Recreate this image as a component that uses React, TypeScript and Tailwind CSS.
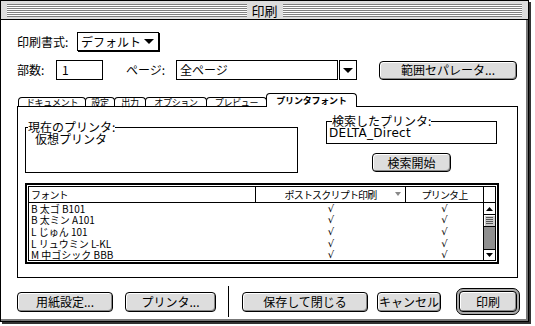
import React from "react";

const STRIPES =
  "h-[13px] flex-1 bg-[repeating-linear-gradient(to_bottom,#808080_0px,#808080_1px,#ffffff_1px,#ffffff_2px)]";

const BUTTON =
  "flex items-center justify-center rounded-[4px] border border-black bg-[#dddddd] shadow-[inset_1px_1px_0_#ffffff,inset_-1px_-1px_0_#888888] text-[12px] leading-none";

const TABS = [
  { label: "ドキュメント", w: "w-[68px]" },
  { label: "設定", w: "w-[30px]" },
  { label: "出力", w: "w-[32px]" },
  { label: "オプション", w: "w-[62px]" },
  { label: "プレビュー", w: "w-[61px]" },
];

const FONTS = [
  "B 太ゴ B101",
  "B 太ミン A101",
  "L じゅん 101",
  "L リュウミン L-KL",
  "M 中ゴシック BBB",
];

function Tri({ up = false, w = 10, h = 5, color = "#000" }) {
  const pts = up ? `0,${h} ${w},${h} ${w / 2},0` : `0,0 ${w},0 ${w / 2},${h}`;
  return (
    <svg width={w} height={h} viewBox={`0 0 ${w} ${h}`} className="block">
      <polygon points={pts} fill={color} />
    </svg>
  );
}

function TitleBar() {
  return (
    <div className="flex h-[19px] items-center border-b border-black bg-[#dddddd] px-[6px]">
      <div className={STRIPES} />
      <div className="px-[5px] text-[13px] leading-none">印刷</div>
      <div className={STRIPES} />
    </div>
  );
}

function Tabs() {
  return (
    <div className="relative z-10 mt-[13px] flex h-[14px] items-end pl-px">
      {TABS.map((t, i) => (
        <div
          key={t.label}
          className={`${t.w} ${i > 0 ? "-ml-px" : ""} mb-px flex h-[9px] items-center justify-center rounded-t-[4px] border-x border-t border-black bg-white text-[9px] leading-none tracking-[-0.3px]`}
        >
          {t.label}
        </div>
      ))}
      <div className="-ml-px flex h-[14px] w-[91px] items-center justify-center rounded-t-[4px] border-x border-t border-black bg-white text-[9px] font-bold leading-none tracking-[-0.2px]">
        プリンタフォント
      </div>
    </div>
  );
}

function FontTable() {
  return (
    <div className="mt-[10px] h-[81px] w-[474px] border-2 border-black p-px">
      <div className="flex h-full flex-col border border-black">
        <div className="flex h-[16px] border-b border-black text-[10px] leading-none tracking-[-0.8px]">
          <div className="flex w-[227px] items-center border-r border-black pl-[2px]">フォント</div>
          <div className="relative flex w-[150px] items-center justify-center border-r border-black">
            ポストスクリプト印刷
            <div className="absolute right-[4px] top-[5px]">
              <Tri w={6} h={4} color="#888888" />
            </div>
          </div>
          <div className="flex w-[78px] items-center justify-center border-r border-black">プリンタ上</div>
          <div className="flex-1" />
        </div>
        <div className="flex min-h-0 flex-1 overflow-hidden">
          <div className="w-[454px]">
            {FONTS.map((f) => (
              <div key={f} className="flex h-[11.6px] items-center text-[10px] leading-[10px]">
                <div className="w-[227px] pl-[2px]">{f}</div>
                <div className="w-[150px] text-center font-['DejaVu_Sans',sans-serif]">√</div>
                <div className="w-[77px] text-center font-['DejaVu_Sans',sans-serif]">√</div>
              </div>
            ))}
          </div>
          <div className="flex flex-1 flex-col border-l border-black">
            <div className="flex h-[12px] items-center justify-center border-b border-black bg-white">
              <Tri up w={7} h={4} />
            </div>
            <div className="flex h-[12px] flex-col items-center justify-center gap-px border-b border-black bg-[#cccccc] shadow-[inset_1px_1px_0_#ffffff]">
              <div className="h-px w-[7px] bg-[#555555]" />
              <div className="h-px w-[7px] bg-[#555555]" />
              <div className="h-px w-[7px] bg-[#555555]" />
              <div className="h-px w-[7px] bg-[#555555]" />
            </div>
            <div className="flex-1 bg-[#8f8f8f]" />
            <div className="flex h-[11px] items-center justify-center border-t border-black bg-white">
              <Tri w={7} h={4} />
            </div>
          </div>
        </div>
      </div>
    </div>
  );
}

function Panel() {
  return (
    <div className="-mt-px flex h-[172px] w-[501px] flex-col border border-black pl-[7px]">
      <div className="flex items-start">
        <div className="relative mt-[20px] h-[46px] w-[273px] border border-black pl-[9px] pt-[5px]">
          <div className="absolute left-[2px] top-[-7px] bg-white text-[12px] leading-[12px]">
            現在のプリンタ:
          </div>
          <div className="text-[12px] leading-[12px]">仮想プリンタ</div>
        </div>
        <div className="ml-[28px] mt-[14px] flex w-[171px] flex-col">
          <div className="relative h-[23px] border border-black pl-[2px] pt-[5px]">
            <div className="absolute left-[5px] top-[-7px] bg-white text-[12px] leading-[12px]">
              検索したプリンタ:
            </div>
            <div className="font-['DejaVu_Sans',sans-serif] text-[12px] leading-[12px] tracking-[0.3px]">
              DELTA_Direct
            </div>
          </div>
          <button type="button" className={`${BUTTON} mt-[9px] h-[19px] w-[79px] self-center`}>
            検索開始
          </button>
        </div>
      </div>
      <FontTable />
    </div>
  );
}

export default function App() {
  return (
    <div className="h-[326px] w-[535px] bg-white font-['Noto_Sans_CJK_JP',sans-serif] text-[12px] leading-none text-black">
      <div className="flex h-[322px] w-[529px] flex-col border border-black bg-white shadow-[inset_-2px_-2px_0_#777777,2px_2px_0_#333333]">
        <TitleBar />
        <div className="flex flex-col pl-[16px]">
          <div className="mt-[12px] flex h-[19px] items-center">
            <div className="w-[60px]">印刷書式:</div>
            <div className="flex h-[19px] w-[82px] items-center justify-between border border-black pl-[3px] pr-[4px] shadow-[1px_1px_0_#000000]">
              <span>デフォルト</span>
              <Tri />
            </div>
          </div>

          <div className="mt-[9px] flex h-[20px] items-center">
            <div className="w-[39px]">部数:</div>
            <div className="flex h-[20px] w-[47px] items-center border border-black pl-[5px]">1</div>
            <div className="ml-[23px] w-[50px]">ページ:</div>
            <div className="flex h-[20px] w-[162px] items-center border border-black pl-[3px]">全ページ</div>
            <div className="ml-[1px] flex h-[20px] w-[18px] items-center justify-center border border-black">
              <Tri />
            </div>
            <button type="button" className={`${BUTTON} ml-[22px] h-[19px] w-[138px]`}>
              範囲セパレータ...
            </button>
          </div>

          <Tabs />
          <Panel />

          <div className="mt-[8px] flex h-[31px] items-center">
            <button type="button" className={`${BUTTON} h-[20px] w-[96px]`}>用紙設定...</button>
            <button type="button" className={`${BUTTON} ml-[12px] h-[20px] w-[91px]`}>プリンタ...</button>
            <div className="ml-[12px] h-[31px] w-px bg-black" />
            <button type="button" className={`${BUTTON} ml-[13px] h-[20px] w-[126px]`}>保存して閉じる</button>
            <button type="button" className={`${BUTTON} ml-[9px] h-[20px] w-[64px]`}>キャンセル</button>
            <div className="ml-[15px] flex h-[27px] w-[64px] rounded-[7px] border border-black bg-[#aaaaaa] p-[2px]">
              <button type="button" className={`${BUTTON} h-full w-full`}>印刷</button>
            </div>
          </div>
        </div>
      </div>
    </div>
  );
}
